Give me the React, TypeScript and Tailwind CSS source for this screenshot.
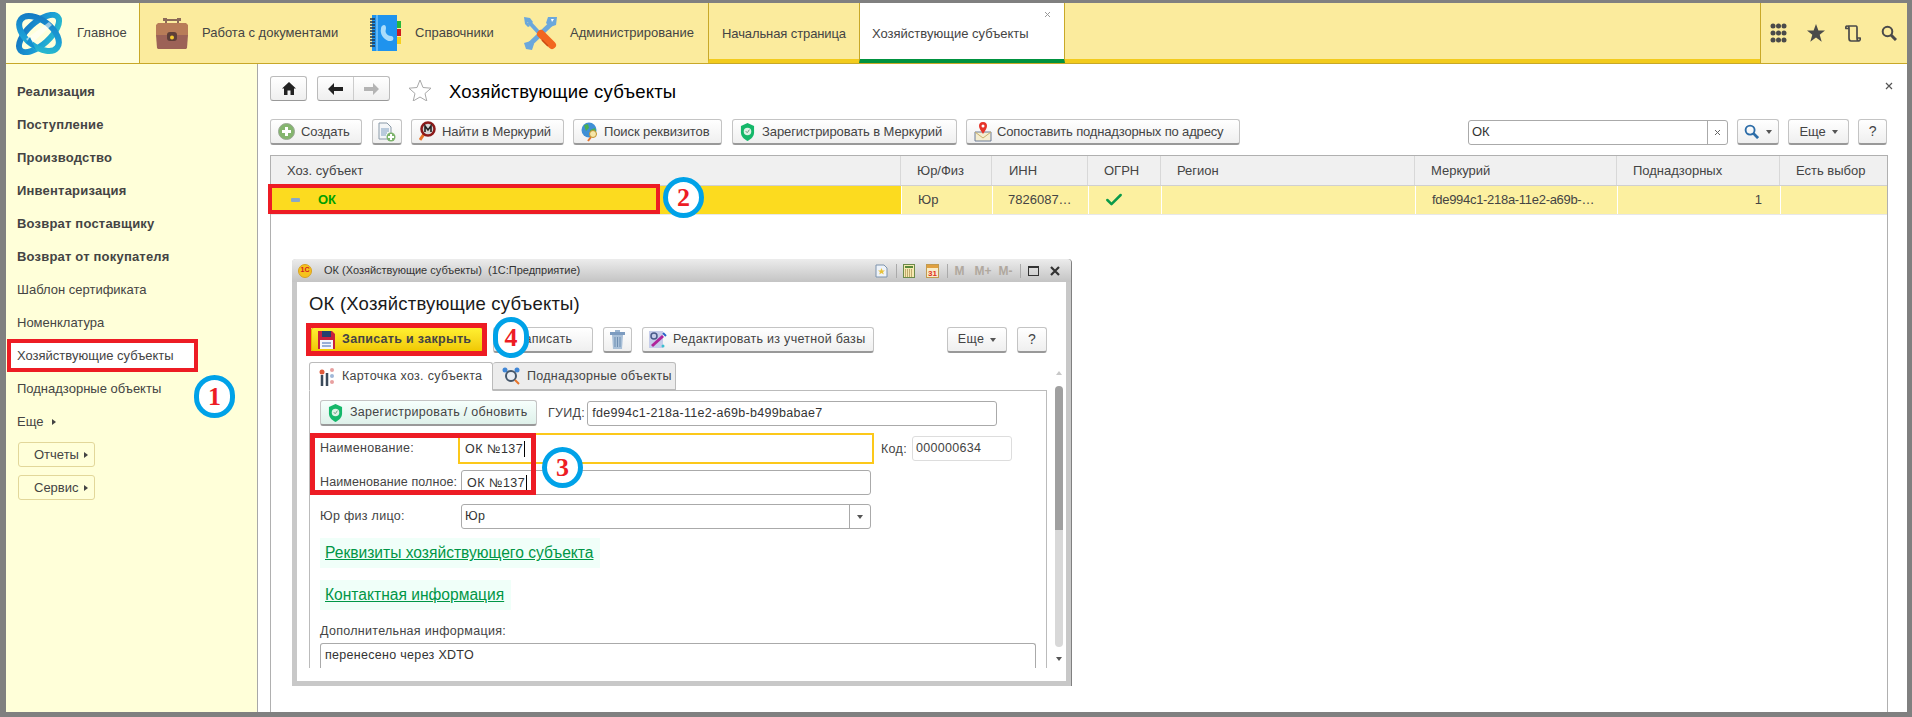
import React from "react";
import { Check } from "lucide-react";

const font = "font-['Liberation_Sans',Arial,sans-serif]";

function Logo() {
  return (
    <svg width="48" height="43" viewBox="0 0 48 43" className="shrink-0">
      <defs>
        <linearGradient id="lg" x1="0" y1="0" x2="1" y2="1">
          <stop offset="0" stopColor="#1474c0" />
          <stop offset="0.6" stopColor="#1b9ed6" />
          <stop offset="1" stopColor="#2bc0cc" />
        </linearGradient>
      </defs>
      <g fill="none" stroke="url(#lg)" strokeWidth="6">
        <ellipse cx="24" cy="21.5" rx="25" ry="11" transform="rotate(-42 24 21.5)" />
        <ellipse cx="24" cy="21.5" rx="23" ry="13" transform="rotate(38 24 21.5)" />
      </g>
      <path fill="#ffffff" d="M11 27L34 10l3 3-21 19z" opacity="0.55" />
      <path fill="#1590d0" d="M15 25l4 9 2 4-10-7z" />
    </svg>
  );
}

function Briefcase() {
  return (
    <svg width="32" height="31" viewBox="0 0 32 31" className="shrink-0">
      <path fill="none" stroke="#8c6a58" strokeWidth="2" d="M10 5V2h12v3" />
      <rect x="7" y="0" width="4" height="3" fill="#8c6a58" />
      <rect x="21" y="0" width="4" height="3" fill="#8c6a58" />
      <path fill="#b87c58" d="M2 5h28l2 2v10H0V7z" />
      <path fill="#9c6257" d="M0 17h32l-1 13-1 1H2l-1-1z" />
      <path fill="#5e3e38" d="M11 20v-3c0-2 1-3 3-3h4c2 0 3 1 3 3v3c0 2-1 3-3 3h-4c-2 0-3-1-3-3z" />
      <circle cx="16" cy="19.500" r="2" fill="#f5c92e" />
    </svg>
  );
}

function Book() {
  return (
    <svg width="31" height="36" viewBox="0 0 31 36" className="shrink-0">
      <rect x="2" y="0" width="25" height="36" fill="#1f93ee" />
      <rect x="6" y="0" width="2" height="36" fill="#62b8f6" />
      <g stroke="#22394d" strokeWidth="1.400">
        <path d="M0 4h5M0 7h5M0 10h5M0 13h5M0 16h5M0 19h5M0 22h5M0 25h5M0 28h5M0 31h5" />
      </g>
      <rect x="27" y="6" width="4" height="7" fill="#27b83c" />
      <rect x="27" y="14" width="4" height="7" fill="#cc1a20" />
      <rect x="27" y="22" width="4" height="7" fill="#f6d01e" />
      <path fill="#a9dcfb" d="M12 11c2-2 4-1 4 2 0 2-1 3 0 5 1 2 3 3 5 3 2 0 3 2 2 4-2 2-6 1-8-1-3-2-5-7-4-10 0-1 0-2 1-3z" />
    </svg>
  );
}

function Tools() {
  return (
    <svg width="33" height="33" viewBox="0 0 33 33" className="shrink-0">
      <path fill="#6aa7dc" d="M0 0l6 1 3 4-2 2-4-2 3 4-2 1-3-3z" />
      <path stroke="#6aa7dc" strokeWidth="4" d="M5 5l11 12" />
      <path stroke="#6aa7dc" strokeWidth="5" d="M28 6L5 28" />
      <path fill="#6aa7dc" d="M24 0l9 0-1 8-6 2-4-4zM0 26l7-2 3 3-2 6-6-1z" />
      <path fill="#ffffff" d="M27 2l3 0-2 3z" />
      <path stroke="#f2661f" strokeWidth="8" strokeLinecap="round" d="M17 17l11 11" />
      <path stroke="#c94a12" strokeWidth="1.500" d="M18 23l6 6" />
    </svg>
  );
}

function PlusRound() {
  return (
    <svg width="17" height="17" viewBox="0 0 17 17" className="shrink-0">
      <circle cx="8.500" cy="8.500" r="8" fill="#84b56e" stroke="#9aa894" />
      <path stroke="#fff" strokeWidth="3" d="M8.500 4v9M4 8.500h9" />
    </svg>
  );
}

function DocPlus() {
  return (
    <svg width="18" height="20" viewBox="0 0 18 20" className="shrink-0">
      <path fill="#f4f6f8" stroke="#8a9aa8" d="M1 1h8l4 4v12H1z" />
      <path stroke="#7f9fc0" d="M3 7h8M3 9h8M3 11h6M3 13h5" />
      <circle cx="13" cy="15" r="4.500" fill="#7cb36b" />
      <path stroke="#fff" strokeWidth="2" d="M13 12v6M10 15h6" />
    </svg>
  );
}

function FindMercury() {
  return (
    <svg width="17" height="21" viewBox="0 0 17 21" className="shrink-0">
      <path stroke="#e8742a" strokeWidth="3" d="M5 13l-4 6" />
      <circle cx="9" cy="8" r="6.500" fill="#d8d8d8" stroke="#8c1a1a" strokeWidth="2.500" />
      <path stroke="#222" strokeWidth="1.600" fill="none" d="M6 11V5l3 4 3-4v6" />
    </svg>
  );
}

function FindGlobe() {
  return (
    <svg width="18" height="20" viewBox="0 0 18 20" className="shrink-0">
      <circle cx="8" cy="8" r="7.500" fill="#3f8fd6" />
      <path fill="#4caf50" d="M3 3l4-1 1 4-3 3zM9 8l5-2 1 3-4 5z" />
      <path stroke="#e8742a" strokeWidth="2" d="M10 15l-3 4" />
      <circle cx="12" cy="12" r="3.500" fill="#f6e6a8" stroke="#c0902a" />
    </svg>
  );
}

function Shield({ size = 16 }: { size?: number }) {
  return (
    <svg width={size} height={size * 1.2} viewBox="0 0 16 19" className="shrink-0">
      <path fill="#15b86a" d="M8 0l7 3v7c0 4-3 7-7 9-4-2-7-5-7-9V3z" />
      <circle cx="8" cy="9" r="4" fill="#dff3e6" />
      <path stroke="#6b8f7a" strokeWidth="1" fill="none" d="M6 9l2 1 2-3" />
    </svg>
  );
}

function MapPin() {
  return (
    <svg width="18" height="20" viewBox="0 0 18 20" className="shrink-0">
      <path fill="#f5edd0" stroke="#6d7c98" d="M1 10h16v9H1z" />
      <path stroke="#c9b06a" fill="none" d="M1 10l8 6 8-6" />
      <path fill="#e63329" d="M9 0c3 0 4 2 4 4 0 2-2 5-4 8-2-3-4-6-4-8 0-2 1-4 4-4z" />
      <circle cx="9" cy="4" r="1.500" fill="#fff" />
    </svg>
  );
}

function Floppy() {
  return (
    <svg width="17" height="19" viewBox="0 0 17 19" className="shrink-0">
      <path fill="#c8203c" d="M0 1h14l3 3v15H0z" />
      <rect x="4" y="1" width="9" height="6" fill="#26406e" />
      <rect x="2" y="10" width="13" height="9" fill="#f4f6fa" />
      <path stroke="#3a66b0" d="M4 13h9M4 16h9" />
    </svg>
  );
}

function Trash() {
  return (
    <svg width="15" height="19" viewBox="0 0 15 19">
      <rect x="0" y="2" width="15" height="3" fill="#7d9cc0" />
      <rect x="5" y="0" width="5" height="2" fill="#9ab4d0" />
      <path fill="#a9c0d8" d="M2 5h11l-1 14H3z" />
      <path stroke="#6f8fb2" d="M5 7v10M7.500 7v10M10 7v10" />
    </svg>
  );
}

function EditBase() {
  return (
    <svg width="19" height="19" viewBox="0 0 19 19" className="shrink-0">
      <rect x="1" y="1" width="14" height="17" fill="#c6cdea" />
      <circle cx="6" cy="6" r="3" fill="none" stroke="#4a5a8a" strokeWidth="1.500" />
      <path stroke="#b0249a" strokeWidth="3" d="M4 16L15 6" />
      <path stroke="#2a62c8" strokeWidth="2" d="M15 3l3 3" />
      <circle cx="15" cy="16" r="1.500" fill="#3cc0d0" />
    </svg>
  );
}

function CardIcon() {
  return (
    <svg width="17" height="19" viewBox="0 0 17 19" className="shrink-0">
      <path stroke="#3a4a5a" strokeWidth="2.500" d="M3 8v11M8 6v13" />
      <circle cx="3" cy="5" r="2.500" fill="#e05a3a" />
      <circle cx="13" cy="3" r="2" fill="#e8a0a0" />
      <circle cx="13" cy="9" r="2" fill="#a0b8d8" />
      <circle cx="13" cy="15" r="2" fill="#e8a0a0" />
    </svg>
  );
}

function PeopleIcon() {
  return (
    <svg width="19" height="19" viewBox="0 0 19 19" className="shrink-0">
      <circle cx="3" cy="3" r="2.500" fill="#3f86d6" />
      <circle cx="15" cy="3" r="2.500" fill="#3f86d6" />
      <circle cx="9" cy="9" r="5" fill="#e8ecf2" stroke="#44566a" strokeWidth="2" />
      <path stroke="#e8742a" strokeWidth="2" d="M13 13l4 4" />
    </svg>
  );
}

function SearchGlass({ color = "#555555", size = 16 }: { color?: string; size?: number }) {
  return (
    <svg width={size} height={size} viewBox="0 0 16 16" className="shrink-0">
      <circle cx="6.500" cy="6.500" r="4.800" fill="none" stroke={color} strokeWidth="2" />
      <path stroke={color} strokeWidth="3" d="M10 10l5 5" />
    </svg>
  );
}

function Caret() {
  return <span className="inline-block w-0 h-0 border-x-[3px] border-x-transparent border-t-[4px] border-t-[#555]" />;
}

const btnPlain = "border-[#c4c4c4] border-b-[#999] bg-gradient-to-b from-white to-[#efefef]";
const btnYellow = "border-[#e0b800] border-b-[#c8a400] bg-gradient-to-b from-[#fff030] to-[#f0c800]";

function Btn({ w, icon, text, look = btnPlain, after }: { w: string; icon?: React.ReactNode; text?: string; look?: string; after?: React.ReactNode }) {
  return (
    <div className={"h-[26px] shrink-0 flex items-center rounded-[3px] border border-b-2 text-[#444] " + look + " " + w}>
      {icon}
      {text && <span className="whitespace-nowrap">{text}</span>}
      {after}
    </div>
  );
}

function SideItem({ text, bold }: { text: string; bold?: boolean }) {
  return (
    <div className={"h-[33px] flex items-center pl-[11px] text-[#444] " + (bold ? "font-bold tracking-[0.2px]" : "")}>{text}</div>
  );
}

const headCells = [
  { t: "Хоз. субъект", w: "w-[630px]", pl: "pl-[16px]" },
  { t: "Юр/Физ", w: "w-[91px]", pl: "pl-[16px]" },
  { t: "ИНН", w: "w-[96px]", pl: "pl-[17px]" },
  { t: "ОГРН", w: "w-[73px]", pl: "pl-[16px]" },
  { t: "Регион", w: "w-[254px]", pl: "pl-[16px]" },
  { t: "Меркурий", w: "w-[202px]", pl: "pl-[16px]" },
  { t: "Поднадзорных", w: "w-[163px]", pl: "pl-[16px]" },
  { t: "Есть выбор", w: "flex-1", pl: "pl-[16px]" },
];

function Circle({ n, className }: { n: string; className: string }) {
  return (
    <div className={"absolute rounded-full border-[5px] border-[#00a2e8] bg-white flex items-center justify-center text-[#ed1c24] font-bold text-[26px] font-['Liberation_Serif',serif] " + className}>{n}</div>
  );
}

function RedBox({ className }: { className: string }) {
  return <div className={"absolute border-[#ed1c24] pointer-events-none " + className} />;
}

function Dialog() {
  return (
    <div className="absolute left-[292px] top-[259px] w-[780px] h-[427px] flex flex-col bg-[#c8c8c8] border-r border-r-[#808080] rounded-t-[4px] text-[12.5px] tracking-[0.3px] text-[#444]">
      <div className="h-[23px] shrink-0 flex items-center bg-gradient-to-b from-[#ececec] to-[#c4c4c4] rounded-t-[4px] text-[#333]">
        <div className="ml-[6px] w-[14px] h-[14px] rounded-full bg-[#f6c21c] border border-[#d8a020] flex items-center justify-center text-[7px] font-bold text-[#d02020] tracking-normal">1С</div>
        <span className="ml-[12px] text-[11px] tracking-[0px]">ОК (Хозяйствующие субъекты)&nbsp;&nbsp;(1С:Предприятие)</span>
        <div className="ml-auto flex items-center pr-[11px] text-[#b0a89e] font-bold text-[12px] tracking-normal">
          <svg width="13" height="14" viewBox="0 0 13 14"><path fill="#eef3f9" stroke="#7d93ad" d="M1 1h8l3 3v9H1z" /><path fill="#e8c23a" d="M6.500 4l1 2.500h2.500l-2 1.500.8 2.500-2.300-1.500-2.300 1.500.8-2.500-2-1.500h2.500z" /></svg>
          <div className="w-px h-[14px] bg-[#aaa] ml-[8px]" />
          <svg className="ml-[6px]" width="12" height="14" viewBox="0 0 12 14"><rect x="0.500" y="0.500" width="11" height="13" fill="#f6e9b0" stroke="#6b8a4a" /><rect x="2" y="2" width="8" height="2" fill="#5a8a3a" /><path stroke="#8a6a2a" strokeDasharray="1 1" d="M2 6h8M2 8h8M2 10h8M2 12h8" /></svg>
          <svg className="ml-[11px]" width="13" height="14" viewBox="0 0 13 14"><rect x="0.500" y="0.500" width="12" height="13" fill="#f8ecc8" stroke="#c09a50" /><rect x="1" y="1" width="11" height="3" fill="#e0a040" /><text x="6.500" y="12" fontSize="8" fontWeight="bold" textAnchor="middle" fill="#e03020">31</text></svg>
          <div className="w-px h-[14px] bg-[#aaa] ml-[8px]" />
          <span className="ml-[6px] w-[11px] text-center">M</span>
          <span className="ml-[9px] w-[18px] text-center">M+</span>
          <span className="ml-[6px] w-[15px] text-center">M-</span>
          <div className="w-px h-[14px] bg-[#aaa] ml-[7px]" />
          <div className="ml-[7px] w-[11px] h-[10px] border border-[#333] border-t-2" />
          <svg className="ml-[11px]" width="10" height="10" viewBox="0 0 10 10"><path stroke="#333" strokeWidth="2.200" d="M1 1l8 8M9 1L1 9" /></svg>
        </div>
      </div>
      <div className="flex-1 min-h-0 ml-[5px] mr-[5px] mb-[5px] bg-white flex flex-col pl-[12px]">
        <div className="h-[34px] pt-[6px] text-[18.5px] leading-[32px] text-[#1a1a1a] tracking-[0.2px]">ОК (Хозяйствующие субъекты)</div>
        <div className="mt-[11px] flex items-center gap-[10px]">
          <Btn w="ml-[2px] w-[172px] pl-[6px] gap-[7px] font-bold" look={btnYellow} icon={<Floppy />} text="Записать и закрыть" />
          <Btn w="w-[100px] justify-center pl-[3px]" text="Записать" />
          <Btn w="w-[29px] justify-center" icon={<Trash />} />
          <Btn w="w-[232px] pl-[5px] gap-[6px]" icon={<EditBase />} text="Редактировать из учетной базы" />
          <Btn w="w-[60px] ml-[63px] justify-center gap-[6px]" text="Еще" after={<Caret />} />
          <Btn w="w-[30px] justify-center text-[14px]" text="?" />
        </div>
        <div className="flex mt-[9px] h-[29px] relative z-10">
          <div className="w-[184px] h-[29px] flex items-center gap-[6px] pl-[9px] border border-[#bbb] border-b-white bg-white rounded-t-[3px]"><CardIcon /><span className="whitespace-nowrap">Карточка хоз. субъекта</span></div>
          <div className="w-[183px] h-[28px] flex items-center gap-[6px] pl-[9px] border border-[#bbb] border-l-0 bg-[#ececec] rounded-t-[3px]"><PeopleIcon /><span className="whitespace-nowrap">Поднадзорные объекты</span></div>
        </div>
        <div className="flex flex-1 min-h-0">
          <div className="w-[738px] -mt-px border border-b-0 border-[#bbb] flex flex-col pl-[10px] mb-[13px] overflow-hidden">
            <div className="flex items-center mt-[9px]">
              <div className="w-[217px] h-[26px] flex items-center gap-[7px] pl-[7px] border border-[#c4c4c4] border-b-[#999] border-b-2 rounded-[3px] bg-gradient-to-b from-[#f6fffc] to-[#dff1ea]"><Shield size={15} /><span className="whitespace-nowrap">Зарегистрировать / обновить</span></div>
              <span className="ml-[11px]">ГУИД:</span>
              <div className="ml-[2px] w-[410px] h-[25px] border border-[#aaa] rounded-[3px] flex items-center pl-[4px] text-[#333]">fde994c1-218a-11e2-a69b-b499babae7</div>
            </div>
            <div className="flex mt-[7px]">
              <div className="w-[138px] h-[31px] flex items-center">Наименование:</div>
              <div className="w-[416px] h-[31px] border-2 border-[#fcc81a] flex items-center pl-[5px] text-[#333] tracking-[0.5px]"><span className="pr-[1px] border-r border-r-black leading-[16px]">ОК №137</span></div>
              <span className="ml-[7px] mt-[7px]">Код:</span>
              <div className="ml-[5px] mt-[3px] w-[100px] h-[25px] border border-[#ddd] rounded-[3px] flex items-center pl-[3px]">000000634</div>
            </div>
            <div className="flex mt-[6px]">
              <div className="w-[141px] h-[25px] flex items-center whitespace-nowrap tracking-[0.1px]">Наименование полное:</div>
              <div className="w-[410px] h-[25px] border border-[#aaa] rounded-[3px] flex items-center pl-[5px] text-[#333] tracking-[0.5px]"><span className="pr-[1px] border-r border-r-black leading-[16px]">ОК №137</span></div>
            </div>
            <div className="flex mt-[9px]">
              <div className="w-[141px] h-[25px] flex items-center">Юр физ лицо:</div>
              <div className="w-[410px] h-[25px] border border-[#aaa] rounded-[3px] flex items-center pl-[3px] text-[#333]">
                <span>Юр</span>
                <div className="ml-auto w-[21px] h-full border-l border-l-[#aaa] flex items-center justify-center"><Caret /></div>
              </div>
            </div>
            <div className="mt-[9px] w-[280px] h-[30px] bg-[#f0fff9] flex items-center pl-[5px] text-[15.6px] tracking-[0px] text-[#009646] underline whitespace-nowrap">Реквизиты хозяйствующего субъекта</div>
            <div className="mt-[12px] w-[191px] h-[30px] bg-[#f0fff9] flex items-center pl-[5px] text-[15.6px] tracking-[0px] text-[#009646] underline whitespace-nowrap">Контактная информация</div>
            <div className="mt-[13px] h-[16px] leading-[16px]">Дополнительная информация:</div>
            <div className="mt-[4px] w-[716px] flex-1 border border-b-0 border-[#aaa] rounded-t-[3px] pl-[4px] pt-[3px] leading-[16px] text-[#333]">перенесено через XDTO</div>
          </div>
          <div className="ml-[8px] w-[8px] mb-[13px] flex flex-col items-center">
            <span className="w-0 h-0 mt-[-20px] border-x-[3px] border-x-transparent border-b-[4px] border-b-[#c8c8c8]" />
            <div className="mt-[11px] w-[8px] h-[144px] bg-[#a0a0a0] rounded-t-[4px] shrink-0" />
            <div className="w-[8px] h-[117px] bg-[#d8d8d8] rounded-b-[4px] shrink-0" />
            <span className="mt-[10px] w-0 h-0 border-x-[3px] border-x-transparent border-t-[4px] border-t-[#555]" />
          </div>
        </div>
      </div>
    </div>
  );
}

export default function App() {
  return (
    <div className={"relative w-[1912px] h-[717px] bg-[#808080] pt-[3px] pl-[6px] pr-[5px] pb-[5px] flex flex-col overflow-hidden text-[13px] " + font}>
      <header className="h-[61px] shrink-0 flex bg-[#fbeb9d] border-b border-b-[#c8a828] text-[#444]">
        <div className="w-[134px] shrink-0 bg-[#ffffdc] border-r border-r-[#c8a828] flex items-center pl-[9px] gap-[14px]">
          <Logo />
          <span>Главное</span>
        </div>
        <div className="w-[229px] shrink-0 flex items-center pl-[16px] gap-[14px]"><Briefcase /><span className="whitespace-nowrap">Работа с документами</span></div>
        <div className="w-[155px] shrink-0 flex items-center pl-[1px] gap-[14px]"><Book /><span>Справочники</span></div>
        <div className="w-[184px] shrink-0 flex items-center gap-[13px]"><Tools /><span>Администрирование</span></div>
        <div className="w-[151px] shrink-0 border-l border-l-[#c8a828] border-b-[4px] border-b-[#f2cb1d] flex items-center pl-[13px] pt-[6px] tracking-[-0.1px]">Начальная страница</div>
        <div className="relative w-[206px] shrink-0 bg-white border-x border-x-[#c8a828] border-b-[4px] border-b-[#00923f] flex items-center pl-[12px] pt-[6px]">
          Хозяйствующие субъекты
          <svg className="absolute right-[13px] top-[8px]" width="7" height="7" viewBox="0 0 7 7"><path stroke="#999" d="M1 1l5 5M6 1L1 6" /></svg>
        </div>
        <div className="flex-1 border-b-[4px] border-b-[#f2cb1d]" />
        <div className="w-[147px] shrink-0 border-l border-l-[#c8a828] flex items-center pl-[9px] gap-[20px]">
          <svg width="17" height="20" viewBox="0 0 17 20"><g fill="#4a4a4a"><circle cx="3" cy="3" r="2.500" /><circle cx="8.500" cy="3" r="2.500" /><circle cx="14" cy="3" r="2.500" /><circle cx="3" cy="10" r="2.500" /><circle cx="8.500" cy="10" r="2.500" /><circle cx="14" cy="10" r="2.500" /><circle cx="3" cy="17" r="2.500" /><circle cx="8.500" cy="17" r="2.500" /><circle cx="14" cy="17" r="2.500" /></g></svg>
          <svg width="18" height="18" viewBox="0 0 18 18"><path fill="#4a4a4a" d="M9 0l2.400 6.500H18l-5.300 4.200 2 7L9 13.500 3.300 17.700l2-7L0 6.500h6.600z" /></svg>
          <svg width="16" height="19" viewBox="0 0 16 19"><path fill="none" stroke="#4a4a4a" strokeWidth="1.700" d="M3 2h8c1 0 1 1 1 2v10c0 2 1 3 2 3H6c-1 0-2-1-2-3V4c0-1-1-2-2-2-1 0-1.500 1.500-1 2.500h3M12 14h3c.5 1 0 3-1 3" /></svg>
          <SearchGlass color="#4a4a4a" />
        </div>
      </header>

      <div className="flex-1 min-h-0 flex">
        <aside className="w-[252px] shrink-0 bg-[#ffffd9] border-r border-r-[#a8a8a8] pt-[11px]">
          {["Реализация", "Поступление", "Производство", "Инвентаризация", "Возврат поставщику", "Возврат от покупателя"].map((t) => (
            <SideItem key={t} text={t} bold />
          ))}
          {["Шаблон сертификата", "Номенклатура"].map((t) => (
            <SideItem key={t} text={t} />
          ))}
          <div className="h-[33px] flex items-center">
            <div className="ml-[5px] w-[183px] h-[25px] bg-white flex items-center pl-[6px] text-[#444]">Хозяйствующие субъекты</div>
          </div>
          <SideItem text="Поднадзорные объекты" />
          <div className="h-[33px] flex items-center pl-[11px] gap-[9px] text-[#444]">
            Еще
            <span className="w-0 h-0 border-y-[3px] border-y-transparent border-l-[4px] border-l-[#444]" />
          </div>
          {["Отчеты", "Сервис"].map((t) => (
            <div key={t} className="h-[33px] flex items-center">
              <div className="ml-[12px] w-[77px] h-[25px] flex items-center pl-[15px] gap-[5px] border border-[#e2d79a] rounded-[3px] text-[#444]">
                {t}
                <span className="w-0 h-0 border-y-[3px] border-y-transparent border-l-[4px] border-l-[#444]" />
              </div>
            </div>
          ))}
        </aside>

        <main className="flex-1 min-w-0 bg-white pl-[12px] pr-[19px] flex flex-col">
          <div className="h-[55px] shrink-0 flex items-start pt-[12px] relative">
            <div className="w-[37px] h-[25px] flex items-center justify-center rounded-[3px] border border-[#bbb] border-b-[#999] bg-gradient-to-b from-white to-[#efefef]">
              <svg width="14" height="13" viewBox="0 0 14 13"><path fill="#222" d="M7 0l7 6.500h-2V13H8.500V8.500h-3V13H2V6.500H0z" /></svg>
            </div>
            <div className="ml-[10px] w-[73px] h-[25px] flex rounded-[3px] border border-[#bbb] border-b-[#999] bg-gradient-to-b from-white to-[#efefef]">
              <div className="w-[36px] flex items-center justify-center border-r border-r-[#ccc]">
                <svg width="15" height="12" viewBox="0 0 15 12"><path fill="#222" d="M0 6l6-6v4h9v4H6v4z" /></svg>
              </div>
              <div className="flex-1 flex items-center justify-center">
                <svg width="15" height="12" viewBox="0 0 15 12"><path fill="#b4b4b4" d="M15 6L9 0v4H0v4h9v4z" /></svg>
              </div>
            </div>
            <svg className="ml-[18px] mt-[3px]" width="24" height="22" viewBox="0 0 24 22"><path fill="#fff" stroke="#a8a8a8" d="M12 1l3 7.500 8 .7-6 5.300 1.800 7.500-6.800-4-6.800 4L7 14.500l-6-5.300 8-.7z" /></svg>
            <h1 className="ml-[17px] mt-[2px] text-[18.5px] text-black tracking-[0.2px] whitespace-nowrap">Хозяйствующие субъекты</h1>
            <svg className="absolute right-[-5px] top-[18px]" width="8" height="8" viewBox="0 0 8 8"><path stroke="#555" strokeWidth="1.200" d="M1 1l6 6M7 1L1 7" /></svg>
          </div>
          <div className="h-[26px] shrink-0 flex items-center tracking-[-0.1px]">
            <Btn w="w-[92px] pl-[7px] gap-[6px]" icon={<PlusRound />} text="Создать" />
            <Btn w="w-[30px] ml-[10px] justify-center" icon={<DocPlus />} />
            <Btn w="w-[153px] ml-[9px] pl-[7px] gap-[6px]" icon={<FindMercury />} text="Найти в Меркурий" />
            <Btn w="w-[149px] ml-[9px] pl-[7px] gap-[5px]" icon={<FindGlobe />} text="Поиск реквизитов" />
            <Btn w="w-[225px] ml-[10px] pl-[7px] gap-[7px]" icon={<Shield size={15} />} text="Зарегистрировать в Меркурий" />
            <Btn w="w-[274px] ml-[9px] pl-[7px] gap-[5px] tracking-[-0.15px]" icon={<MapPin />} text="Сопоставить поднадзорных по адресу" />
            <div className="ml-[228px] w-[260px] h-[25px] flex items-center border border-[#aaa] rounded-[3px] text-[#333]">
              <span className="flex-1 pl-[3px]">ОК</span>
              <div className="w-[20px] h-full border-l border-l-[#aaa] flex items-center justify-center">
                <svg width="7" height="7" viewBox="0 0 7 7"><path stroke="#666" d="M1 1l5 5M6 1L1 6" /></svg>
              </div>
            </div>
            <Btn w="w-[42px] ml-[9px] justify-center gap-[7px]" icon={<SearchGlass color="#2d6da8" size={15} />} after={<Caret />} />
            <Btn w="w-[61px] ml-[9px] justify-center gap-[6px]" text="Еще" after={<Caret />} />
            <Btn w="w-[29px] ml-[9px] justify-center text-[14px]" text="?" />
          </div>
          <div className="mt-[10px] flex-1 min-h-0 border border-[#b0b0b0] border-b-0 flex flex-col text-[#444]">
            <div className="h-[30px] shrink-0 flex bg-[#f0f0f0] border-b border-b-[#d0d0d0]">
              {headCells.map((c, i) => (
                <div key={c.t} className={"flex items-center " + c.w + " " + c.pl + (i < 7 ? " border-r border-r-[#d8d8d8]" : "")}>{c.t}</div>
              ))}
            </div>
            <div className="h-[28px] shrink-0 flex bg-[#fcf0a0] border-b border-b-[#e8e8e8] box-content text-[#444]">
              <div className="w-[630px] bg-[#fcdb1f] flex items-center pl-[20px] gap-[18px] font-bold text-[#00a000]">
                <span className="w-[9px] h-[4px] rounded-[1px] bg-[#88a8c8]" />
                ОК
              </div>
              <div className="w-[91px] border-l border-l-white flex items-center pl-[16px]">Юр</div>
              <div className="w-[96px] border-l border-l-white flex items-center pl-[15px]">7826087…</div>
              <div className="w-[73px] border-l border-l-white flex items-center pl-[15px]"><Check size={20} strokeWidth={3} className="text-[#0a9a4a]" /></div>
              <div className="w-[254px] border-l border-l-white" />
              <div className="w-[202px] border-l border-l-white flex items-center pl-[16px] tracking-[-0.3px]">fde994c1-218a-11e2-a69b-…</div>
              <div className="w-[163px] border-l border-l-white flex items-center justify-end pr-[18px]">1</div>
              <div className="flex-1 border-l border-l-white" />
            </div>
          </div>
        </main>
      </div>

      <Dialog />

      <RedBox className="left-[7px] top-[339px] w-[191px] h-[33px] border-[4px]" />
      <RedBox className="left-[268px] top-[184px] w-[392px] h-[30px] border-[4px]" />
      <RedBox className="left-[306px] top-[323px] w-[181px] h-[33px] border-[5px]" />
      <RedBox className="left-[310px] top-[433px] w-[226px] h-[62px] border-[5px]" />

      <Circle n="1" className="left-[194px] top-[375px] w-[41px] h-[43px]" />
      <Circle n="2" className="left-[663px] top-[177px] w-[41px] h-[41px]" />
      <Circle n="3" className="left-[542px] top-[447px] w-[41px] h-[41px]" />
      <Circle n="4" className="left-[493px] top-[317px] w-[36px] h-[41px]" />
    </div>
  );
}
